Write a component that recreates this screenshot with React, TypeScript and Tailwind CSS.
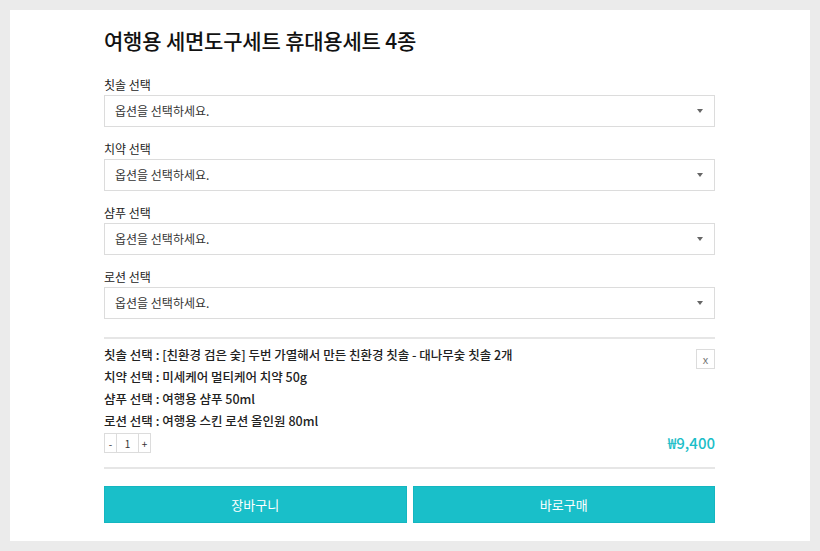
import React from "react";

const font = { fontFamily: '"Noto Sans CJK KR", "Noto Sans", sans-serif' };

function Select({ label }: { label: string }) {
  return (
    <div>
      <div className="h-[18px] leading-[18px] text-[12px] text-[#222]">{label}</div>
      <div className="mt-[1px] h-[32px] border border-[#dcdcdc] flex items-center justify-between pl-[10px] pr-[11px]">
        <span className="text-[12px] text-[#333]">옵션을 선택하세요.</span>
        <span className="w-0 h-0 border-l-[3px] border-r-[3px] border-t-[4px] border-l-transparent border-r-transparent border-t-[#666]" />
      </div>
    </div>
  );
}

export default function App() {
  return (
    <div className="w-[820px] h-[551px] bg-[#ebebeb] p-[10px]" style={font}>
      <div className="bg-white h-[531px] pl-[94px] pr-[95px] pt-[10px]">
        <h1 className="h-[40px] leading-[40px] text-[21px] font-medium text-[#111] tracking-[-0.2px]">
          여행용 세면도구세트 휴대용세트 4종
        </h1>
        <div className="mt-[16px] flex flex-col gap-[13px]">
          <Select label="칫솔 선택" />
          <Select label="치약 선택" />
          <Select label="샴푸 선택" />
          <Select label="로션 선택" />
        </div>
        <div className="mt-[18px] h-[2px] bg-[#e6e6e6]" />
        <div className="relative pt-[5px]">
          <div className="text-[12.5px] font-medium text-[#222] leading-[22px]">
            <div>칫솔 선택 : [친환경 검은 숯] 두번 가열해서 만든 친환경 칫솔 - 대나무숯 칫솔 2개</div>
            <div>치약 선택 : 미세케어 멀티케어 치약 50g</div>
            <div>샴푸 선택 : 여행용 샴푸 50ml</div>
            <div>로션 선택 : 여행용 스킨 로션 올인원 80ml</div>
          </div>
          <button className="absolute right-0 top-[10px] w-[19px] h-[20px] border border-[#dcdcdc] text-[11px] text-[#777] flex items-center justify-center">
            x
          </button>
          <div className="mt-[1px] flex items-center justify-between h-[20px]">
            <div className="flex h-[20px] border border-[#dcdcdc] text-[10px] text-[#333]">
              <span className="w-[11px] flex items-center justify-center">-</span>
              <span className="w-[23px] flex items-center justify-center border-l border-r border-[#dcdcdc]">1</span>
              <span className="w-[11px] flex items-center justify-center">+</span>
            </div>
            <span className="text-[15px] font-medium text-[#1bbec8]">₩9,400</span>
          </div>
        </div>
        <div className="mt-[14px] h-[2px] bg-[#e6e6e6]" />
        <div className="mt-[17px] flex gap-[6px]">
          <button className="flex-1 h-[37px] bg-[#19bfc9] border border-[#14b6c0] text-white text-[13px]">장바구니</button>
          <button className="flex-1 h-[37px] bg-[#19bfc9] border border-[#14b6c0] text-white text-[13px]">바로구매</button>
        </div>
      </div>
    </div>
  );
}
